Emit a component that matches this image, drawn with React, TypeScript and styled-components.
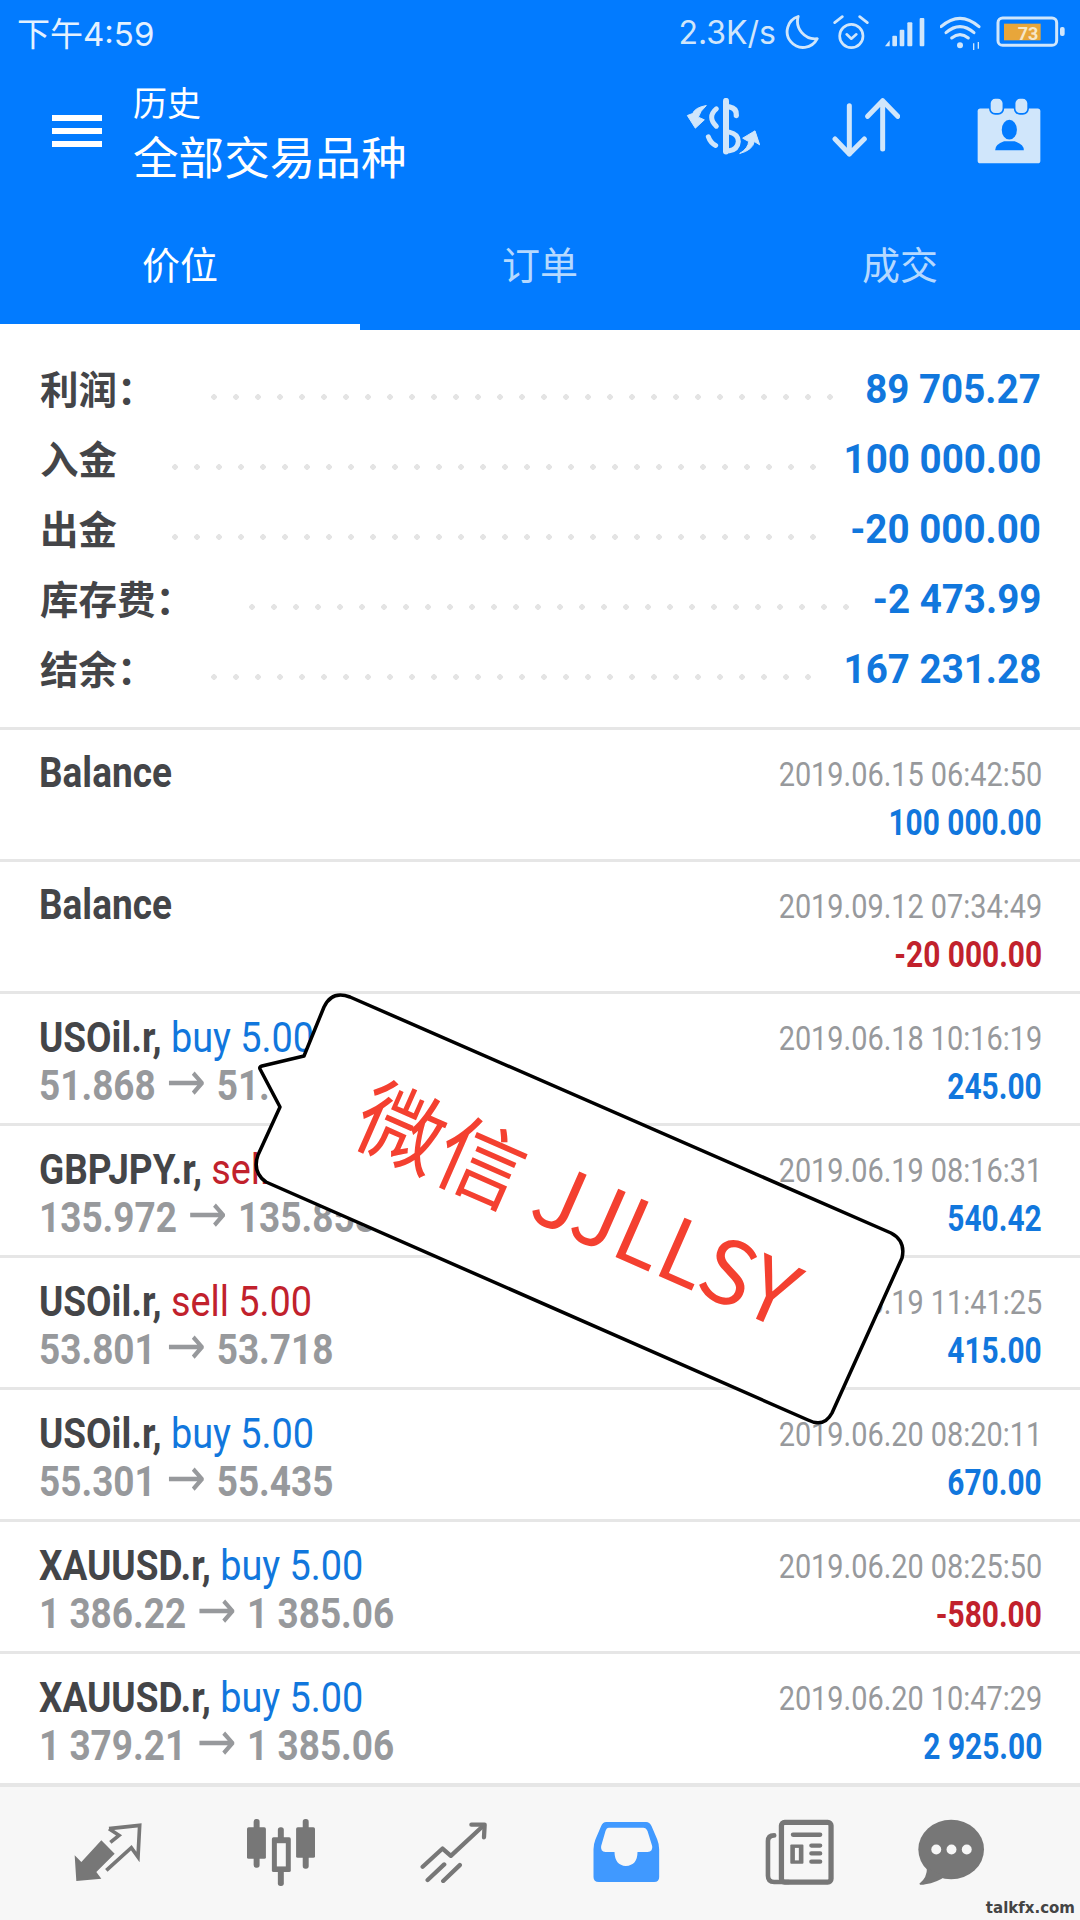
import React from 'react';
import styled, { createGlobalStyle } from 'styled-components';

const SANS = '"Roboto", "Noto Sans CJK SC", sans-serif';
const CJK = '"Noto Sans CJK SC", "Roboto", sans-serif';

const BLUE = '#1177dd';
const RED = '#c1212c';
const GRAY = '#97999c';
const DARK = '#444548';
const BAR = '#027bff';
const PALE = '#d0e6fb';
const ICON = '#777777';
const NAV_BG = '#f7f7f7';

const GlobalStyle = createGlobalStyle`
  html, body {
    margin: 0;
    padding: 0;
    background: #fff;
  }
`;

interface SummaryItem {
  label: string;
  value: string;
  dots: number;
}

const summary: SummaryItem[] = [
  { label: '利润：', value: '89 705.27', dots: 29 },
  { label: '入金', value: '100 000.00', dots: 30 },
  { label: '出金', value: '-20 000.00', dots: 30 },
  { label: '库存费：', value: '-2 473.99', dots: 28 },
  { label: '结余：', value: '167 231.28', dots: 28 },
];

interface Deal {
  symbol: string;
  side?: 'buy' | 'sell';
  prices?: [string, string];
  date: string;
  amount: string;
  loss?: boolean;
}

const deals: Deal[] = [
  { symbol: 'Balance', date: '2019.06.15 06:42:50', amount: '100 000.00' },
  { symbol: 'Balance', date: '2019.09.12 07:34:49', amount: '-20 000.00', loss: true },
  { symbol: 'USOil.r', side: 'buy', prices: ['51.868', '51.819'], date: '2019.06.18 10:16:19', amount: '245.00' },
  { symbol: 'GBPJPY.r', side: 'sell', prices: ['135.972', '135.858'], date: '2019.06.19 08:16:31', amount: '540.42' },
  { symbol: 'USOil.r', side: 'sell', prices: ['53.801', '53.718'], date: '2019.06.19 11:41:25', amount: '415.00' },
  { symbol: 'USOil.r', side: 'buy', prices: ['55.301', '55.435'], date: '2019.06.20 08:20:11', amount: '670.00' },
  { symbol: 'XAUUSD.r', side: 'buy', prices: ['1 386.22', '1 385.06'], date: '2019.06.20 08:25:50', amount: '-580.00', loss: true },
  { symbol: 'XAUUSD.r', side: 'buy', prices: ['1 379.21', '1 385.06'], date: '2019.06.20 10:47:29', amount: '2 925.00' },
];

const App: React.FC = () => (
  <Page>
    <GlobalStyle />
    <Header>
      <StatusBar>
        <Clock>下午4:59</Clock>
        <StatusIcons>
          <Speed>2.3K/s</Speed>
          <MoonIcon />
          <AlarmIcon />
          <SignalIcon />
          <WifiIcon />
          <BatteryIcon />
        </StatusIcons>
      </StatusBar>
      <Toolbar>
        <Burger>
          <span />
          <span />
          <span />
        </Burger>
        <TitleBlock>
          <Subtitle>历史</Subtitle>
          <Title>全部交易品种</Title>
        </TitleBlock>
        <Actions>
          <ActionSlot>
            <DollarIcon />
          </ActionSlot>
          <ActionSlot>
            <SortIcon />
          </ActionSlot>
          <ActionSlot>
            <ContactIcon />
          </ActionSlot>
        </Actions>
      </Toolbar>
      <Tabs>
        <Tab $active>价位</Tab>
        <Tab>订单</Tab>
        <Tab>成交</Tab>
      </Tabs>
    </Header>

    <Summary>
      {summary.map((item) => (
        <SummaryRow key={item.label}>
          <SummaryLabel>{item.label}</SummaryLabel>
          <Leader style={{ width: item.dots * 22 }} />
          <SummaryValue>{item.value}</SummaryValue>
        </SummaryRow>
      ))}
    </Summary>

    <DealList>
      {deals.map((deal) => (
        <DealRow key={deal.date}>
          <DealLeft>
            <TitleLine>
              {deal.symbol}
              {deal.side && ', '}
              {deal.side && <Side $side={deal.side}>{deal.side} 5.00</Side>}
            </TitleLine>
            {deal.prices && (
              <PriceLine>
                {deal.prices[0]}
                <Arrow>→</Arrow>
                {deal.prices[1]}
              </PriceLine>
            )}
          </DealLeft>
          <DealRight>
            <DateLine>{deal.date}</DateLine>
            <AmountLine $loss={deal.loss}>{deal.amount}</AmountLine>
          </DealRight>
        </DealRow>
      ))}
    </DealList>

    <BottomNav>
      <NavSlot>
        <TradeIcon />
      </NavSlot>
      <NavSlot>
        <CandleIcon />
      </NavSlot>
      <NavSlot>
        <TrendIcon />
      </NavSlot>
      <NavSlot>
        <InboxIcon />
      </NavSlot>
      <NavSlot>
        <NewsIcon />
      </NavSlot>
      <ChatSlot>
        <ChatIcon />
      </ChatSlot>
    </BottomNav>

    <Bubble viewBox="240 970 680 470" width={680} height={470}>
      <path
        d="M350 997 L891 1233 Q906 1241 902 1258 L832 1413 Q824 1428 808 1420 L266 1182 Q252 1172 258 1155 L280 1107 L260 1069 Q259 1067 262 1066 L304 1056 L324 1007 Q332 990 350 997 Z"
        fill="#fff"
        stroke="#000"
        strokeWidth={3.5}
        strokeLinejoin="round"
      />
    </Bubble>
    <BubbleText>微信 JJLLSY</BubbleText>
    <Watermark>talkfx.com</Watermark>
  </Page>
);

/* status bar icons */
const MoonIcon = () => (
  <svg width={36} height={36} viewBox="375 48 102 102">
    <path
      d="M418 55 A45 45 0 1 0 472 118 A50 50 0 0 1 418 55 Z"
      fill="none"
      stroke={PALE}
      strokeWidth={8}
      strokeLinejoin="round"
    />
  </svg>
);

const AlarmIcon = () => (
  <svg width={36} height={36} viewBox="520 42 108 108">
    <g fill="none" stroke={PALE} strokeWidth={8} strokeLinecap="round" strokeLinejoin="round">
      <circle cx={575} cy={108} r={35} />
      <path d="M561 103 L575 116 L590 103" />
      <path d="M525 68 L548 50 M600 50 L623 68" />
    </g>
  </svg>
);

const SignalIcon = () => (
  <svg width={43} height={30} viewBox="665 52 123 90">
    <g fill={PALE}>
      <path d="M668 140 L682 122 V140 Z" />
      <rect x={690} y={108} width={14} height={32} rx={3} />
      <rect x={712} y={90} width={14} height={50} rx={3} />
      <rect x={735} y={68} width={15} height={72} rx={3} />
      <rect x={772} y={55} width={14} height={85} rx={3} />
    </g>
  </svg>
);

const WifiIcon = () => (
  <svg width={42} height={36} viewBox="835 42 126 108">
    <g fill="none" stroke={PALE} strokeWidth={9} strokeLinecap="round">
      <path d="M838 80 Q895 30 952 80" />
      <path d="M853 98 Q895 62 937 98" />
      <path d="M870 114 Q895 94 920 114" />
    </g>
    <circle cx={895} cy={136} r={9} fill={PALE} />
    <path d="M936 130 V150 M950 126 V146" stroke={PALE} strokeWidth={4} />
  </svg>
);

const BatteryIcon = () => (
  <svg width={70} height={32} viewBox="1006 52 210 96">
    <rect x={1012} y={58} width={176} height={82} rx={14} fill="none" stroke={PALE} strokeWidth={9} />
    <rect x={1030} y={75} width={110} height={50} fill="#e8a63a" />
    <rect x={1198} y={85} width={14} height={27} rx={6} fill={PALE} />
    <text x={1102} y={123} fontFamily="Roboto, sans-serif" fontSize={54} fontWeight={700} fill="#f6e7c8" textAnchor="middle">
      73
    </text>
  </svg>
);

/* toolbar icons */
const DollarIcon = () => (
  <svg width={74} height={57} viewBox="75 66 222 170">
    <g fill="none" stroke={PALE} strokeLinecap="round">
      <path d="M195 74 V226" strokeWidth={18} />
      <path d="M205 92 Q228 96 226 118" strokeWidth={16} />
      <path d="M166 98 Q138 122 166 150" strokeWidth={15} />
      <path d="M205 168 Q232 174 232 196 Q230 220 205 224" strokeWidth={15} />
      <path d="M142 182 Q148 200 164 208" strokeWidth={15} />
    </g>
    <g fill={PALE} stroke={PALE} strokeWidth={3} strokeLinejoin="round">
      <path d="M136 88 Q102 94 95 112 L79 118 L103 156 L130 131 L112 123 Q117 105 136 88 Z" />
      <path d="M236 232 Q262 216 263 196 L245 186 L282 164 L296 206 L280 196 Q275 222 236 232 Z" />
    </g>
  </svg>
);

const SortIcon = () => (
  <svg width={68} height={59} viewBox="513 67 204 177">
    <g fill="none" stroke={PALE} strokeWidth={15} strokeLinecap="round" strokeLinejoin="round">
      <path d="M565 90 V235 M522 190 L565 235 L610 190" />
      <path d="M665 75 V220 M620 122 L665 75 L710 122" />
    </g>
  </svg>
);

const ContactIcon = () => (
  <svg width={64} height={66} viewBox="948 52 194 200">
    <rect x={950} y={84} width={190} height={166} rx={8} fill={PALE} />
    <rect x={987} y={52} width={41} height={48} rx={16} fill={PALE} stroke={BAR} strokeWidth={5} />
    <rect x={1062} y={52} width={41} height={48} rx={16} fill={PALE} stroke={BAR} strokeWidth={5} />
    <ellipse cx={1046} cy={148} rx={23} ry={30} fill={BAR} />
    <path d="M1003 210 Q1003 192 1030 183 L1062 183 Q1090 192 1090 210 Z" fill={BAR} />
  </svg>
);

/* bottom navigation icons */
const TradeIcon = () => (
  <svg width={70} height={60} viewBox="40 35 210 180">
    <path d="M125 90 L165 130 L110 185 L125 205 L50 212 L45 135 L65 155 Z" fill={ICON} />
    <path
      d="M148 55 L240 45 L235 140 L215 112 L140 180 M148 55 L178 75 L152 96"
      fill="none"
      stroke={ICON}
      strokeWidth={11}
    />
  </svg>
);

const CandleIcon = () => (
  <svg width={68} height={67} viewBox="560 25 205 202">
    <g fill={ICON}>
      <rect x={580} y={25} width={18} height={147} rx={8} />
      <rect x={560} y={50} width={57} height={95} rx={5} />
      <rect x={653} y={50} width={18} height={177} rx={8} />
      <rect x={635} y={80} width={57} height={105} rx={5} />
      <rect x={728} y={25} width={18} height={150} rx={8} />
      <rect x={708} y={50} width={57} height={92} rx={5} />
    </g>
    <rect x={650} y={98} width={27} height={70} fill={NAV_BG} />
  </svg>
);

const TrendIcon = () => (
  <svg width={67} height={61} viewBox="33 30 200 184">
    <g fill="none" stroke={ICON} strokeWidth={13} strokeLinecap="round" strokeLinejoin="round">
      <path d="M40 165 L100 110 L125 132 L222 42" />
      <path d="M187 38 L227 38 L225 76" />
      <path d="M55 205 L105 158" />
      <path d="M102 208 L152 160" />
    </g>
  </svg>
);

const InboxIcon = () => (
  <svg width={67} height={62} viewBox="553 30 200 186">
    <path
      d="M592 33 H712 Q722 33 728 45 L745 85 Q751 100 751 115 V198 Q751 213 736 213 H570 Q554 213 554 198 V115 Q554 100 560 85 L577 45 Q582 33 592 33 Z"
      fill="#4099ff"
    />
    <path
      d="M600 50 H703 Q712 50 716 60 L730 105 Q733 122 716 123 H686 Q686 163 651 165 Q618 163 617 123 H590 Q574 122 577 105 L590 60 Q593 50 600 50 Z"
      fill={NAV_BG}
    />
  </svg>
);

const NewsIcon = () => (
  <svg width={69} height={67} viewBox="48 24 210 200">
    <g fill="none" stroke={ICON} strokeLinecap="round">
      <rect x={98} y={32} width={151} height={182} rx={10} strokeWidth={16} />
      <path d="M76 72 Q57 72 57 90 V195 Q57 214 76 214 H120" strokeWidth={14} />
      <path d="M133 70 H216" strokeWidth={13} />
      <path d="M189 103 H216 M189 127 H216 M189 152 H216" strokeWidth={13} />
    </g>
    <rect x={125} y={100} width={40} height={58} rx={3} fill={ICON} />
    <rect x={139} y={110} width={12} height={38} fill={NAV_BG} />
  </svg>
);

const ChatIcon = () => (
  <svg width={67} height={67} viewBox="508 24 202 200">
    <ellipse cx={608} cy={115} rx={99} ry={90} fill={ICON} />
    <path d="M535 170 Q536 200 512 218 Q514 224 530 220 Q565 214 590 196 Z" fill={ICON} />
    <circle cx={563} cy={115} r={15} fill={NAV_BG} />
    <circle cx={609} cy={115} r={15} fill={NAV_BG} />
    <circle cx={655} cy={115} r={15} fill={NAV_BG} />
  </svg>
);

const Page = styled.div`
  position: relative;
  width: 1080px;
  height: 1920px;
  display: flex;
  flex-direction: column;
  overflow: hidden;
  background: #fff;
  font-family: ${SANS};
`;

const Header = styled.header`
  background: ${BAR};
  flex: none;
`;

const StatusBar = styled.div`
  height: 60px;
  display: flex;
  align-items: center;
  justify-content: space-between;
  padding: 4px 14px 0 17px;
  box-sizing: border-box;
`;

const Clock = styled.span`
  font-family: 'Inter', ${CJK};
  font-size: 33px;
  color: #e4f1ff;
  white-space: nowrap;
`;

const StatusIcons = styled.div`
  display: flex;
  align-items: center;
  gap: 14px;
`;

const Speed = styled.span`
  font-family: 'Inter', sans-serif;
  font-size: 32px;
  color: ${PALE};
  margin-right: -7px;
  white-space: nowrap;
`;

const Toolbar = styled.div`
  height: 142px;
  display: flex;
  align-items: center;
  padding-left: 52px;
`;

const Burger = styled.div`
  width: 50px;
  display: flex;
  flex-direction: column;
  gap: 7px;

  span {
    display: block;
    height: 6px;
    background: #fff;
  }
`;

const TitleBlock = styled.div`
  margin-left: 31px;
  display: flex;
  flex-direction: column;
  font-family: ${CJK};
  color: #fff;
`;

const Subtitle = styled.div`
  font-size: 34px;
  line-height: 50px;
  height: 50px;
`;

const Title = styled.div`
  font-size: 45.6px;
  line-height: 62px;
  height: 62px;
  margin-top: -3px;
`;

const Actions = styled.div`
  margin-left: auto;
  display: flex;
`;

const ActionSlot = styled.div`
  width: 143px;
  display: flex;
  justify-content: center;
`;

const Tabs = styled.div`
  height: 128px;
  display: grid;
  grid-template-columns: repeat(3, 360px);
`;

const Tab = styled.div<{ $active?: boolean }>`
  display: flex;
  align-items: center;
  justify-content: center;
  box-sizing: border-box;
  font-family: ${CJK};
  font-size: 38px;
  color: ${(props) => (props.$active ? '#fff' : '#b5d9ff')};
  border-bottom: 6px solid ${(props) => (props.$active ? '#fff' : BAR)};
  padding-bottom: 2px;
`;

const Summary = styled.section`
  flex: none;
  padding: 24px 39px 23px 40px;
  background: #fff;
`;

const SummaryRow = styled.div`
  height: 70px;
  display: flex;
  align-items: center;
`;

const SummaryLabel = styled.span`
  font-family: ${CJK};
  font-size: 38.5px;
  font-weight: 700;
  color: ${DARK};
  white-space: nowrap;
  margin: -4px 55px 0 0;
`;

const Leader = styled.span`
  height: 6px;
  margin-top: 16px;
  background-image: radial-gradient(circle at 3px 3px, #e4e4e4 2.6px, transparent 3px);
  background-size: 22px 6px;
  background-repeat: repeat-x;
`;

const SummaryValue = styled.span`
  margin-left: auto;
  font-size: 41px;
  font-weight: 700;
  color: ${BLUE};
  white-space: nowrap;
  display: inline-block;
  transform: scaleX(0.94);
  transform-origin: right center;
`;

const DealList = styled.section`
  flex: 1;
  min-height: 0;
  overflow: hidden;
`;

const DealRow = styled.div`
  height: 132px;
  box-sizing: border-box;
  border-top: 3px solid #e6e6e6;
  padding: 19px 38px 0 39px;
  display: flex;
  justify-content: space-between;
`;

const DealLeft = styled.div`
  transform: scaleX(0.88);
  transform-origin: left center;
  white-space: nowrap;
`;

const TitleLine = styled.div`
  font-size: 42px;
  line-height: 48px;
  font-weight: 700;
  color: ${DARK};
`;

const Side = styled.span<{ $side: 'buy' | 'sell' }>`
  font-weight: 400;
  font-size: 43px;
  color: ${(props) => (props.$side === 'buy' ? BLUE : RED)};
`;

const PriceLine = styled.div`
  font-size: 42px;
  line-height: 48px;
  font-weight: 700;
  color: ${GRAY};
`;

const Arrow = styled.span`
  font-weight: 400;
  font-family: 'DejaVu Sans', sans-serif;
  font-size: 54px;
  line-height: 0;
  margin: 0 12px;
`;

const DealRight = styled.div`
  display: flex;
  flex-direction: column;
  align-items: flex-end;
  white-space: nowrap;
  padding-top: 2px;
`;

const DateLine = styled.div`
  font-size: 33px;
  line-height: 48px;
  color: ${GRAY};
  transform: scaleX(0.875);
  transform-origin: right center;
`;

const AmountLine = styled.div<{ $loss?: boolean }>`
  font-size: 36px;
  line-height: 48px;
  font-weight: 700;
  color: ${(props) => (props.$loss ? RED : BLUE)};
  transform: scaleX(0.83);
  transform-origin: right center;
`;

const BottomNav = styled.nav`
  flex: none;
  height: 137px;
  box-sizing: border-box;
  border-top: 4px solid #e6e6e6;
  background: ${NAV_BG};
  padding: 31px 0 0 21px;
  display: flex;
  align-items: flex-start;
`;

const NavSlot = styled.div`
  width: 173px;
  height: 68px;
  display: flex;
  align-items: center;
  justify-content: center;
`;

const ChatSlot = styled(NavSlot)`
  margin-left: -21px;
`;

const Bubble = styled.svg`
  position: absolute;
  left: 240px;
  top: 970px;
`;

const BubbleText = styled.div`
  position: absolute;
  left: 230px;
  top: 1150px;
  width: 700px;
  height: 100px;
  line-height: 100px;
  text-align: center;
  font-family: ${CJK};
  font-size: 87px;
  color: #f44030;
  white-space: nowrap;
  transform: rotate(23.7deg);
`;

const Watermark = styled.div`
  position: absolute;
  right: 5px;
  bottom: 3px;
  font-family: 'DejaVu Sans', sans-serif;
  font-size: 15px;
  line-height: 18px;
  font-weight: 700;
  color: #444;
`;

export default App;
